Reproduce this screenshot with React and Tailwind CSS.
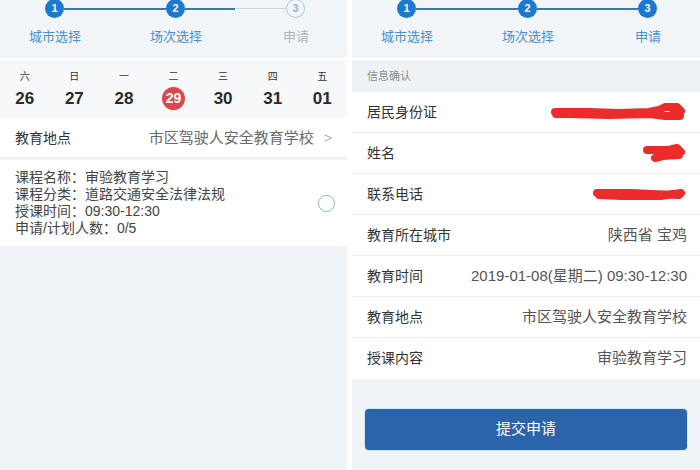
import React from "react";

const font = { fontFamily: '"Liberation Sans", "Noto Sans CJK SC", sans-serif' };

const Scribble = ({ d, w, h, sw = 8 }) => (
  <svg width={w} height={h} viewBox={`0 0 ${w} ${h}`} className="block">
    <path d={d} stroke="#ee2b2b" strokeWidth={sw} strokeLinecap="round" strokeLinejoin="round" fill="none" />
  </svg>
);

const Stepper = ({ done }) => {
  const dark = "bg-[#46769c]";
  return (
    <div className="h-[58px] bg-[#f1f5f8] pt-0 overflow-hidden">
      <div className="flex items-center pl-[45px] -mt-[1px]">
        <div className="w-[19px] h-[19px] rounded-full bg-[#1d78d2] text-white text-[11px] font-bold flex items-center justify-center">1</div>
        <div className={`w-[102px] h-[2px] ${dark}`} />
        <div className="w-[19px] h-[19px] rounded-full bg-[#1d78d2] text-white text-[11px] font-bold flex items-center justify-center">2</div>
        {done ? (
          <div className={`w-[101px] h-[2px] ${dark}`} />
        ) : (
          <div className="flex w-[101px]">
            <div className={`w-[50px] h-[2px] ${dark}`} />
            <div className="w-[51px] h-px bg-[#c9d8e4]" />
          </div>
        )}
        {done ? (
          <div className="w-[19px] h-[19px] rounded-full bg-[#1d78d2] text-white text-[11px] font-bold flex items-center justify-center">3</div>
        ) : (
          <div className="w-[19px] h-[19px] rounded-full border border-[#a9c8e2] bg-[#f4f8fb] text-[#8db4d6] text-[11px] font-bold flex items-center justify-center">3</div>
        )}
      </div>
      <div className="flex mt-[10px] ml-[15px] text-[13px] leading-[18px]">
        <div className="w-[80px] text-center text-[#4a90d0]">城市选择</div>
        <div className="w-[41px]" />
        <div className="w-[80px] text-center text-[#4a90d0]">场次选择</div>
        <div className="w-[40px]" />
        <div className={`w-[80px] text-center ${done ? "text-[#4a90d0]" : "text-[#b3b6b9]"}`}>申请</div>
      </div>
    </div>
  );
};

const days = [
  ["六", "26"],
  ["日", "27"],
  ["一", "28"],
  ["二", "29"],
  ["三", "30"],
  ["四", "31"],
  ["五", "01"],
];

const LeftPanel = () => (
  <div className="w-[347px] h-full bg-[#f0f3f6] flex flex-col">
    <Stepper done={false} />
    <div className="h-[2px] bg-white" />
    <div className="h-[58px] bg-[#f6f8fa] flex">
      {days.map(([d, n]) => (
        <div key={n} className="w-[50px] flex flex-col items-center">
          <div className="text-[10px] text-[#333] leading-[12px] mt-[11px]">{d}</div>
          {n === "29" ? (
            <div className="mt-[4px] w-[23px] h-[23px] rounded-full bg-[#e0474c] text-white text-[14px] font-bold flex items-center justify-center">29</div>
          ) : (
            <div className="mt-[6px] text-[17px] font-bold text-[#2a2a2a] leading-[20px]">{n}</div>
          )}
        </div>
      ))}
    </div>
    <div className="h-[2px] bg-white" />
    <div className="h-[38px] bg-white flex items-center px-[15px] text-[14px] border-b border-[#eceef0]">
      <span className="text-[#333]">教育地点</span>
      <span className="ml-auto text-[#6a6a6a] text-[15px]">市区驾驶人安全教育学校</span>
      <span className="ml-[10px] text-[#b5b5b5] text-[14px]">&gt;</span>
    </div>
    <div className="bg-white h-[86px] flex items-center pl-[15px] pr-[12px] mt-[2px]">
      <div className="text-[14px] leading-[17px] text-[#444]">
        <div>课程名称：审验教育学习</div>
        <div>课程分类：道路交通安全法律法规</div>
        <div>授课时间：09:30-12:30</div>
        <div>申请/计划人数：0/5</div>
      </div>
      <div className="ml-auto w-[17px] h-[17px] rounded-full border-[1.5px] border-[#8fb0cc]" />
    </div>
  </div>
);

const rows = [
  ["居民身份证", <Scribble w={138} h={20} d="M6 10 L40 10 L70 11 L100 10 L110 8 L116 5 L128 5 L132 9 L124 12 L131 14 L116 14 L100 12 L60 13 L20 12 L7 12" />],
  ["姓名", <Scribble w={46} h={22} d="M6 8 L28 8 L36 6 L40 10 L32 12 L20 12 L14 16 L22 14 L38 13" />],
  ["联系电话", <Scribble w={96} h={18} d="M6 8 L40 8 L60 9 L88 10 L90 8 L70 11 L30 11 L8 10" />],
  ["教育所在城市", "陕西省 宝鸡"],
  ["教育时间", "2019-01-08(星期二) 09:30-12:30"],
  ["教育地点", "市区驾驶人安全教育学校"],
  ["授课内容", "审验教育学习"],
];

const RightPanel = () => (
  <div className="w-[348px] h-full bg-[#f1f4f7] flex flex-col">
    <Stepper done={true} />
    <div className="h-[2px] bg-white" />
    <div className="h-[32px] bg-[#eef2f5] flex items-center pl-[15px] text-[11px] text-[#8a8d90]">信息确认</div>
    <div className="bg-white">
      {rows.map(([label, value], i) => (
        <div
          key={label}
          className={`h-[41px] flex items-center pr-[13px] pl-[15px] ${i < rows.length - 1 ? "border-b border-[#eeeff1]" : ""}`}
        >
          <span className="text-[14px] text-[#333]">{label}</span>
          <span className="ml-auto text-[15px] text-[#555]">{value}</span>
        </div>
      ))}
    </div>
    <div className="px-[13px] pt-[30px]">
      <button className="w-full h-[41px] rounded-[4px] bg-[#2c64ab] text-white text-[15px] shadow-[0_0_0_1px_#d2e6f6]">
        提交申请
      </button>
    </div>
  </div>
);

const App = () => (
  <div className="w-[700px] h-[470px] bg-white flex justify-between overflow-hidden" style={font}>
    <LeftPanel />
    <RightPanel />
  </div>
);

export default App;
